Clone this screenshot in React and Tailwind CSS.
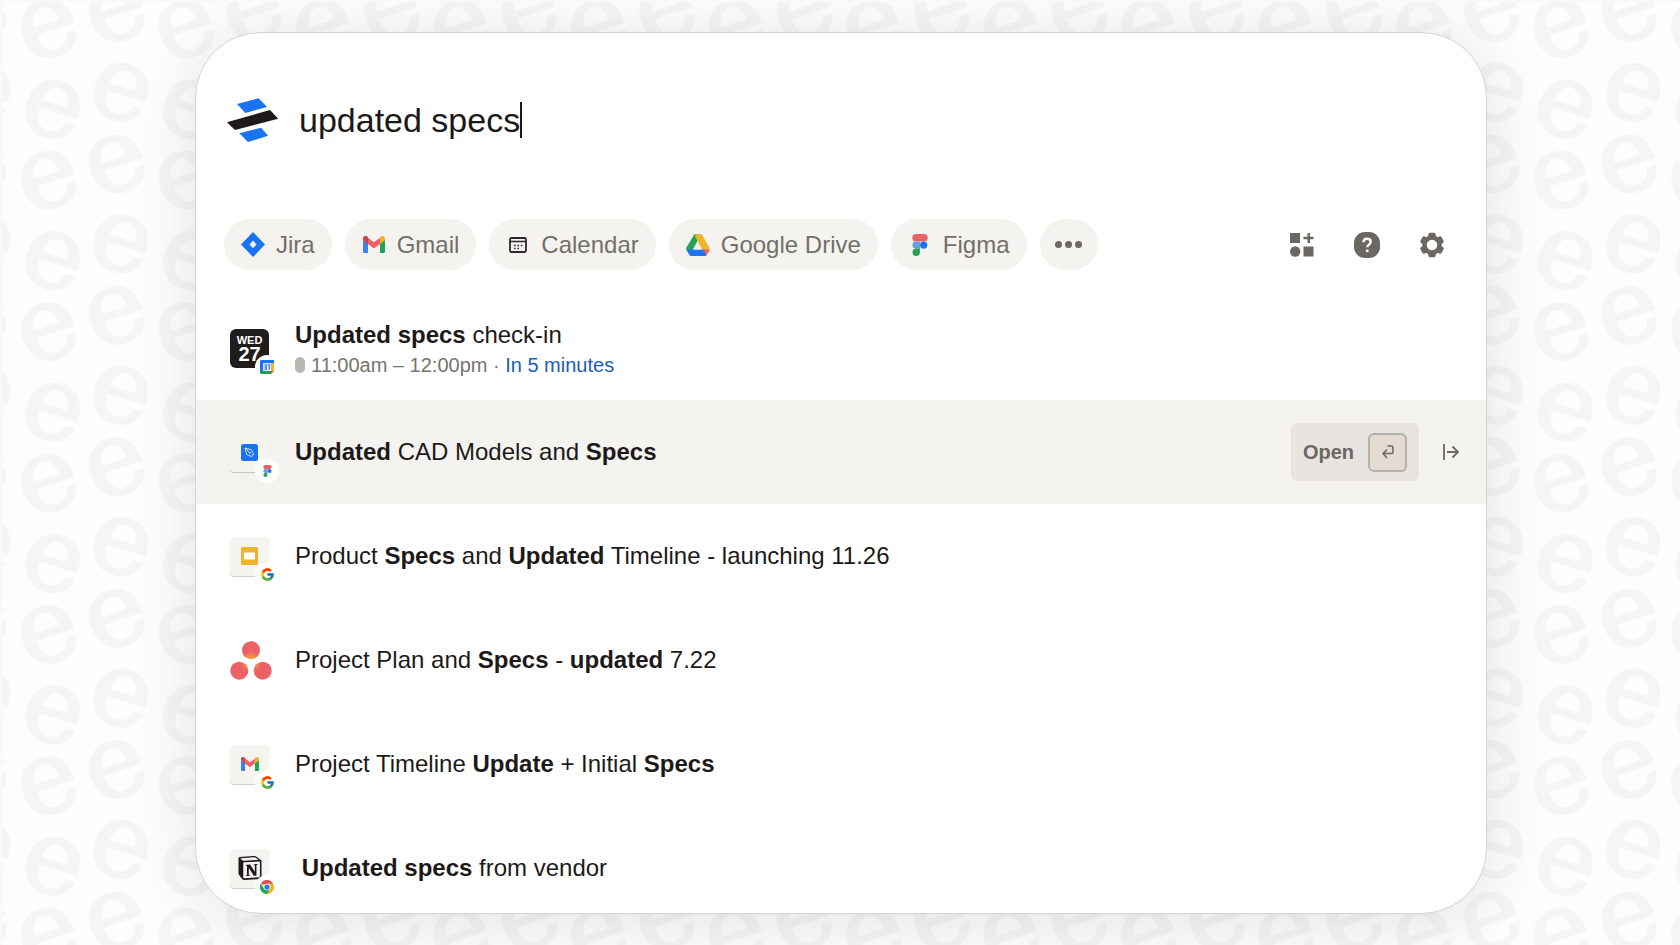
import { useState } from "react";
import { FcGoogle } from "react-icons/fc";
import { SiNotion } from "react-icons/si";

function Backdrop() {
    return (
        <svg className="absolute inset-0 size-full" aria-hidden="true">
            <defs>
                <pattern id="letters" x="12" y="58" width="137.5" height="151.4" patternUnits="userSpaceOnUse">
                    <g fill="#f5f6f4" stroke="#f5f6f4" strokeWidth="2.500" fontFamily="DejaVu Serif, serif" fontSize="103" textAnchor="middle">
                        <text transform="translate(39 48) rotate(17)" y="28">e</text>
                        <text transform="translate(34 119) rotate(-18)" y="28">e</text>
                        <text transform="translate(107 31) rotate(17)" y="28">e</text>
                        <text transform="translate(102 103) rotate(-18)" y="28">e</text>
                    </g>
                </pattern>
            </defs>
            <rect width="100%" height="100%" fill="url(#letters)" />
        </svg>
    );
}

function DashLogo() {
    return (
        <svg className="w-[52px] h-11 shrink-0" viewBox="0 0 52 44" aria-hidden="true">
            <path fill="#1a73f0" d="M10 6 31.6.3 40 9l-21.6 6zM12.3 35.3 34 29.7l7.2 8L21 44z" />
            <path fill="#1e1919" d="M0 24.3 43 12l8.2 8.7L8 32z" />
        </svg>
    );
}

function JiraIcon() {
    return (
        <svg className="w-6 h-[25px]" viewBox="0 0 24 25" aria-hidden="true">
            <path fill="#1a73f0" fillRule="evenodd" d="M12 0 24 12.500 12 25 0 12.500zM12 8.500 8.500 12.400l3.500 3.800 3.500-3.800z" />
        </svg>
    );
}

function GmailIcon({ className }) {
    return (
        <svg className={className} viewBox="0 0 22 17" aria-hidden="true">
            <path fill="#3f83e8" d="M0 4v11.500Q0 17 1.500 17H5V7z" />
            <path fill="#23a35a" d="M22 4v11.500q0 1.500-1.500 1.500H17V7z" />
            <path fill="#eb6166" d="M5 8V1.800L11 6.300l6-4.500V8l-6 4.500z" />
            <path fill="#c8434a" d="M0 4V2.500C0 .2 2.600-.8 4.300.6L5 1.200V8z" />
            <path fill="#f0b429" d="M22 4V2.500C22 .2 19.400-.8 17.700.6l-.7.6V8z" />
        </svg>
    );
}

function CalendarIcon() {
    return (
        <svg className="w-[18px] h-4" viewBox="0 0 18 16" fill="none" aria-hidden="true">
            <rect x="1" y="1" width="16" height="14" rx="1.500" stroke="#2b2727" strokeWidth="1.800" />
            <path d="M1 4.500h16" stroke="#2b2727" strokeWidth="1.600" />
            <path d="M5 8.500h9M5 11.500h6" stroke="#2b2727" strokeWidth="1.600" strokeDasharray="1.600 1.800" />
        </svg>
    );
}

function DriveIcon() {
    return (
        <svg className="w-6 h-[22px]" viewBox="0 0 24 22" aria-hidden="true">
            <path fill="#23a35a" d="M8.500 0h6.800L4 20.800.4 15.500q-.6-1 0-2z" />
            <path fill="#f0b429" d="M9.500 0h5.200q.9 0 1.400.9L23.600 14l-.5 2H16.500L8.800 2z" />
            <path fill="#1a73f0" d="M.3 15.500h18L20.500 21q-.4 1-1.500 1H5q-1.100 0-1.600-.9z" />
            <path fill="#eb6166" d="M16.500 15.500H24l-3.500 5.800z" />
            <path fill="#f4f3ef" d="M12 9.500l3.500 6h-7z" />
        </svg>
    );
}

function FigmaIcon({ className }) {
    return (
        <svg className={className} viewBox="0 0 16 22" aria-hidden="true">
            <path fill="#eb6166" d="M4 0h8a3.700 3.700 0 0 1 0 7.400H4a3.700 3.700 0 0 1 0-7.400z" />
            <path fill="#6c9be0" d="M4 7.400h4.200v7.200H4a3.600 3.600 0 0 1 0-7.200z" />
            <circle cx="11.700" cy="11.100" r="3.600" fill="#1a73f0" />
            <path fill="#23a35a" d="M4.200 14.600H7.900v3.700a3.700 3.700 0 1 1-3.700-3.700z" />
        </svg>
    );
}

function GoogleCalendarIcon() {
    return (
        <svg className="size-[14px]" viewBox="0 0 14 14" aria-hidden="true">
            <path fill="#1a73f0" d="M1.500 0H14v3H3v8H0V1.500Q0 0 1.500 0z" />
            <path fill="#f0b429" d="M11 3h3v8h-3z" />
            <path fill="#1f9b55" d="M0 11h11v3H1.500Q0 14 0 12.500z" />
            <path fill="#eb4b4b" d="M11 11h3l-3 3z" />
            <path fill="#dbe8fb" d="M3 3h8v8H3z" />
            <path d="M4.500 4.800h1.800v4.400H4.500M4.500 7h1.800M8 5l1.300-.3v4.600" stroke="#1a73f0" strokeWidth="1.100" fill="none" />
        </svg>
    );
}

function ChromeIcon() {
    return (
        <svg className="size-[14px]" viewBox="0 0 14 14" aria-hidden="true">
            <path fill="#e0524f" d="M7 7 .9 3.500a7 7 0 0 1 12.200 0z" />
            <path fill="#f0b429" d="M7 7V3.500h6.100A7 7 0 0 1 7 14l3-5.300z" />
            <path fill="#23a35a" d="M.9 3.500A7 7 0 0 0 7 14l3-5.300-6 0z" />
            <circle cx="7" cy="7" r="3.300" fill="#fff" />
            <circle cx="7" cy="7" r="2.600" fill="#2f76e4" />
        </svg>
    );
}

function PenIcon() {
    return (
        <svg className="size-[17px]" viewBox="0 0 17 17" fill="none" aria-hidden="true">
            <rect width="17" height="17" rx="2.500" fill="#1a73f0" />
            <path d="M4 4l6.500 1.800 2 4.400-2.300 2.300-4.400-2z" stroke="#cfe0fb" strokeWidth="1" />
            <path d="M4 4l4.500 4.500M10 13l3-3" stroke="#cfe0fb" strokeWidth="1" />
            <circle cx="8.800" cy="8.800" r="1" fill="#cfe0fb" />
        </svg>
    );
}

function SlidesIcon() {
    return (
        <svg className="w-[17px] h-[18px]" viewBox="0 0 17 18" aria-hidden="true">
            <rect width="17" height="18" rx="1.500" fill="#efb22d" />
            <rect x="3" y="5.500" width="11" height="7" fill="#fff" />
        </svg>
    );
}

function AsanaIcon() {
    return (
        <svg className="w-[42px] h-[39px]" viewBox="0 0 42 39" aria-hidden="true">
            <defs>
                <radialGradient id="asana" cx="21" cy="21" r="16" gradientUnits="userSpaceOnUse">
                    <stop offset="0.25" stopColor="#f2a33c" />
                    <stop offset="0.65" stopColor="#eb6166" />
                </radialGradient>
            </defs>
            <g fill="url(#asana)">
                <circle cx="21" cy="9.200" r="9" />
                <circle cx="9.300" cy="29.700" r="9" />
                <circle cx="32.700" cy="29.700" r="9" />
            </g>
        </svg>
    );
}

function AppsIcon() {
    return (
        <svg className="size-6" viewBox="0 0 24 24" fill="#6b6762" aria-hidden="true">
            <path d="M0 0h10v10H0zM13.500 13.500h10v10h-10zM17.500 0h2.500v3.700h3.500v2.500H20V10h-2.500V6.200h-4V3.700h4z" />
            <circle cx="5.200" cy="18.500" r="5.200" />
        </svg>
    );
}

function HelpIcon() {
    return (
        <svg className="size-[26px]" viewBox="0 0 26 26" fill="none" aria-hidden="true">
            <rect width="26" height="26" rx="11" fill="#6b6762" />
            <path d="M9.500 10.200C9.500 7.800 11 6.700 13 6.700s3.700 1.200 3.700 3.200c0 2.600-3.500 2.800-3.500 5.300" stroke="#fff" strokeWidth="2.400" />
            <circle cx="13.200" cy="18.700" r="1.500" fill="#fff" />
        </svg>
    );
}

function GearIcon() {
    return (
        <svg className="size-[26px]" viewBox="-13 -13 26 26" fill="#6b6762" aria-hidden="true">
            <circle r="9.800" />
            <rect x="-3.700" y="-12.200" width="7.400" height="24.400" rx="1.800" />
            <rect x="-3.700" y="-12.200" width="7.400" height="24.400" rx="1.800" transform="rotate(60)" />
            <rect x="-3.700" y="-12.200" width="7.400" height="24.400" rx="1.800" transform="rotate(120)" />
            <circle r="5.300" fill="#fff" />
        </svg>
    );
}

function Tile({ children, badge }) {
    return (
        <span className="relative flex size-[39px] shrink-0 items-center justify-center rounded bg-[#f5f4f1] shadow-[0_1px_1px_rgba(0,0,0,0.2)]">
            {children}
            <span className="absolute -right-2.5 -bottom-[11px] flex size-6 items-center justify-center rounded-full bg-white">
                {badge}
            </span>
        </span>
    );
}

function DateTile() {
    return (
        <span className="relative flex size-[39px] shrink-0 flex-col items-center justify-center rounded-md bg-[#1f1c1c] text-white">
            <span className="text-[11px] leading-[11px] font-bold">WED</span>
            <span className="text-xl leading-4 font-bold">27</span>
            <span className="absolute -right-2.5 -bottom-[11px] flex size-6 items-center justify-center rounded-full bg-white">
                <GoogleCalendarIcon />
            </span>
        </span>
    );
}

const filters = [
    { name: "Jira", icon: <JiraIcon /> },
    { name: "Gmail", icon: <GmailIcon className="w-[22px] h-[17px]" /> },
    { name: "Calendar", icon: <CalendarIcon /> },
    { name: "Google Drive", icon: <DriveIcon /> },
    { name: "Figma", icon: <FigmaIcon className="w-4 h-[22px]" /> },
];

const results = [
    {
        id: "check-in",
        icon: <DateTile />,
        title: <><b>Updated specs</b> check-in</>,
        time: "11:00am – 12:00pm",
        soon: "In 5 minutes",
    },
    {
        id: "cad",
        icon: <Tile badge={<FigmaIcon className="w-[9px] h-3" />}><PenIcon /></Tile>,
        title: <><b>Updated</b> CAD Models and <b>Specs</b></>,
    },
    {
        id: "product",
        icon: <Tile badge={<FcGoogle className="size-[15px]" />}><SlidesIcon /></Tile>,
        title: <>Product <b>Specs</b> and <b>Updated</b> Timeline - launching 11.26</>,
    },
    {
        id: "plan",
        icon: <AsanaIcon />,
        title: <>Project Plan and <b>Specs</b> - <b>updated</b> 7.22</>,
    },
    {
        id: "timeline",
        icon: <Tile badge={<FcGoogle className="size-[15px]" />}><GmailIcon className="w-[18px] h-[14px]" /></Tile>,
        title: <>Project Timeline <b>Update</b> + Initial <b>Specs</b></>,
    },
    {
        id: "vendor",
        icon: <Tile badge={<ChromeIcon />}><SiNotion className="size-6 text-[#1e1919]" /></Tile>,
        title: <>&nbsp;<b>Updated specs</b> from vendor</>,
    },
];

function ResultRow({ result, active }) {
    return (
        <li className={active ? "flex h-[104px] items-center pl-[34px] pr-[23px] bg-[#f4f3ef]" : "flex h-[104px] items-center pl-[34px] pr-[23px]"}>
            <span className="flex w-[65px] shrink-0">{result.icon}</span>
            <div className={result.time ? "min-w-0 flex-1 pt-0.5" : "min-w-0 flex-1"}>
                <a href="#" className="block truncate text-2xl leading-8 text-[#1e1919]">{result.title}</a>
                {result.time && (
                    <p className="flex items-center text-xl leading-7 text-[#77736e]">
                        <span className="mr-1.5 h-4 w-2.5 rounded-full bg-[#bbb8b3]"></span>
                        <span className="whitespace-pre">{result.time} · </span>
                        <span className="text-[#1a5dbb]">{result.soon}</span>
                    </p>
                )}
            </div>
            {active && (
                <div className="flex shrink-0 items-center gap-5">
                    <button className="flex h-[58px] items-center gap-3.5 rounded-md bg-[#e8e5e1] px-3 text-xl font-bold text-[#6b6762]">
                        Open
                        <span className="flex size-[39px] items-center justify-center rounded-md border-2 border-[#b4b0ab] bg-[#e5dbd2]">
                            <svg className="w-3 h-[14px]" viewBox="0 0 12 14" fill="none" stroke="#6b6762" strokeWidth="1.500">
                                <path d="M5.500 1H9.500Q11 1 11 2.500V7q0 1.500-1.500 1.500H1.500M5 4.500l-4 4 4 4.500" />
                            </svg>
                        </span>
                    </button>
                    <button aria-label="Expand" className="flex w-6 justify-center">
                        <svg className="size-4" viewBox="0 0 16 16" fill="none" stroke="#6b6762" strokeWidth="1.800">
                            <path d="M1 0v16M4 8h10.500M9.500 2.500 15 8l-5.500 5.500" />
                        </svg>
                    </button>
                </div>
            )}
        </li>
    );
}

export default function App() {
    const [query, setQuery] = useState("updated specs");

    return (
        <div className="relative min-h-screen overflow-hidden border-t-2 border-l-2 border-[#f8f9f9] bg-[#fdfdfb] pt-[30px] pb-8 pl-[193px] pr-[193px] font-['Liberation_Sans',Arial,sans-serif]">
            <Backdrop />
            <main className="relative overflow-hidden rounded-[66px] border border-[#d4d4d3] bg-white shadow-[0_8px_64px_rgba(0,0,0,0.11)]">
                <label className="flex items-center gap-5 pt-[58px] pl-[31px]">
                    <DashLogo />
                    <span className="flex h-[58px] items-center">
                        <input
                            aria-label="Search"
                            className="field-sizing-content bg-transparent text-[34px] leading-[44px] text-[#1e1919] outline-none"
                            value={query}
                            onChange={(e) => setQuery(e.target.value)}
                        />
                        <span className="h-[36px] w-0.5 bg-[#1e1919]"></span>
                    </span>
                </label>

                <div className="mt-[70px] flex items-center justify-between pl-7 pr-[41px]">
                    <div className="flex gap-[13px]">
                        {filters.map((f) => (
                            <button key={f.name} className="flex h-[51px] items-center gap-[11px] rounded-full bg-[#f4f3ef] px-[17px] text-2xl text-[#736f6a]">
                                <span className="flex w-6 justify-center">{f.icon}</span>
                                {f.name}
                            </button>
                        ))}
                        <button aria-label="More" className="flex h-[51px] w-[58px] items-center justify-center gap-[3px] rounded-full bg-[#f4f3ef]">
                            <span className="size-[7px] rounded-full bg-[#6b6762]"></span>
                            <span className="size-[7px] rounded-full bg-[#6b6762]"></span>
                            <span className="size-[7px] rounded-full bg-[#6b6762]"></span>
                        </button>
                    </div>
                    <div className="flex gap-[39px]">
                        <button aria-label="Apps" className="flex size-[26px] items-center justify-center"><AppsIcon /></button>
                        <button aria-label="Help" className="flex size-[26px] items-center justify-center"><HelpIcon /></button>
                        <button aria-label="Settings" className="flex size-[26px] items-center justify-center"><GearIcon /></button>
                    </div>
                </div>

                <ul className="mt-[26px] -mb-[7px]">
                    {results.map((r) => (
                        <ResultRow key={r.id} result={r} active={r.id === "cad"} />
                    ))}
                </ul>
            </main>
        </div>
    );
}
